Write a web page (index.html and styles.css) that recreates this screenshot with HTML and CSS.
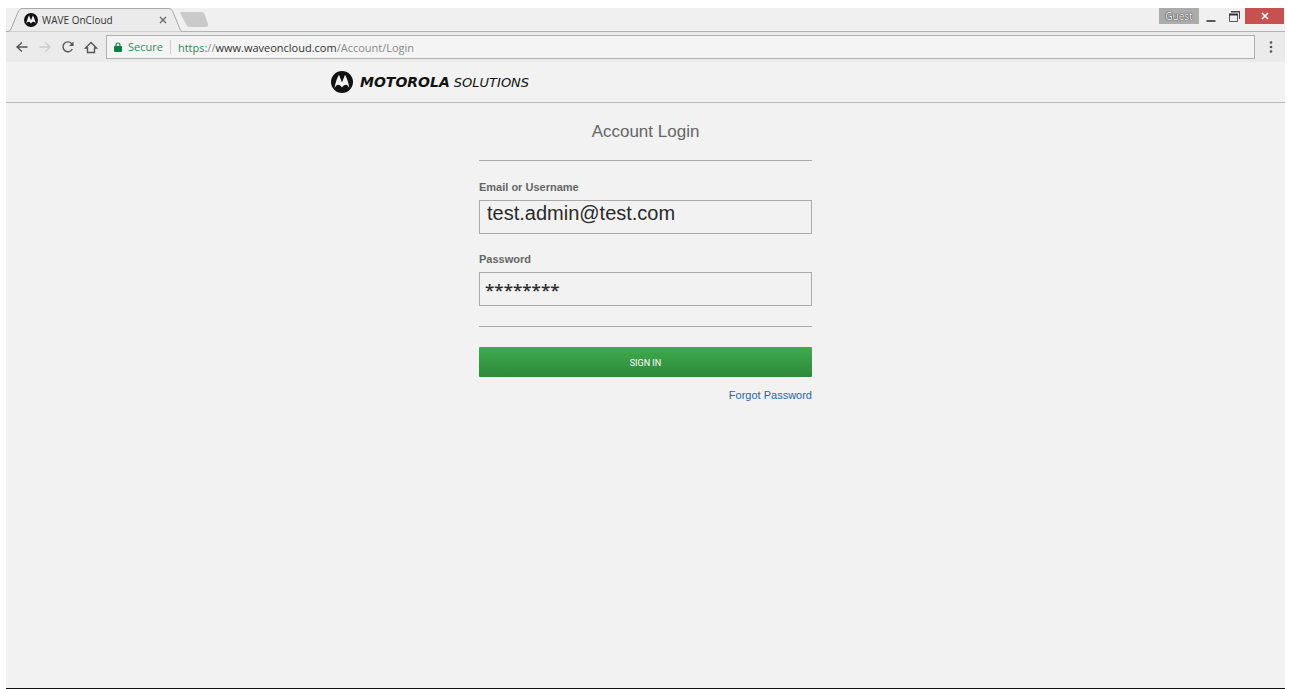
FILE: index.html
```html
<!DOCTYPE html>
<html lang="en">
<head>
  <meta charset="UTF-8">
  <meta name="viewport" content="width=device-width, initial-scale=1.0">
  <title>WAVE OnCloud</title>
  <link rel="stylesheet" href="styles.css">
</head>
<body>
  <svg class="svg-defs">
    <defs>
      <symbol id="moto" viewBox="0 0 24 24">
        <circle cx="12" cy="12" r="12" fill="#111"></circle>
        <path fill="#f2f2f2" d="M8.700 4.200L12 12.600l3.300-8.400c1.700 3 4.200 9 4.700 14.800-1-2.600-2.200-4-3.700-4-1.700 0-2.900.9-4.300 3-1.400-2.100-2.600-3-4.300-3-1.500 0-2.700 1.400-3.700 4 .5-5.800 3-11.800 4.700-14.800z"></path>
      </symbol>
    </defs>
  </svg>

  <div class="window">
    <div class="tabStrip">
      <div class="tab">
        <svg class="tabShape" viewBox="0 0 176 24"><path d="M0 23.500L2 23.500Q4 23 5 21L12 4Q13.500.5 16 .5L163 .5Q165.500.5 167 4L173.500 20Q174.500 23 176 23.500" fill="#ebebeb" stroke="#a9a9a9"></path></svg>
        <svg class="tabIcon"><use href="#moto"></use></svg>
        <span class="tabTitle">WAVE OnCloud</span>
        <button class="tabClose" aria-label="Close tab"><svg viewBox="0 0 8 8"><path d="M1 1L7 7M7 1L1 7" stroke="#666" stroke-width="1.300"></path></svg></button>
      </div>
      <button class="newTab" aria-label="New tab"><svg viewBox="0 0 30 16"><path d="M1 0H21Q23.500 0 24.500 2L28 12Q28.500 15 26 15H10Q7.500 15 6.500 13L.5 2Q0 0 1 0z" fill="#cacaca"></path></svg></button>
      <div class="winButtons">
        <button class="guest">Guest</button>
        <button class="winBtn" aria-label="Minimize"><svg viewBox="0 0 12 12"><path d="M1.500 11H10.500" stroke="#333" stroke-width="1.600"></path></svg></button>
        <button class="winBtn" aria-label="Restore"><svg viewBox="0 0 12 12"><path d="M3 1.500H11.500V9" fill="none" stroke="#444"></path><path d="M3 2H12" stroke="#444"></path><path d="M1.500 4.500H9.500V11.500H1.500z" fill="#f0f0f0" stroke="#555"></path><path d="M1 4.500H10" stroke="#333" stroke-width="2"></path></svg></button>
        <button class="winClose" aria-label="Close"><svg viewBox="0 0 8 8"><path d="M1 1L7 7M7 1L1 7" stroke="#fff" stroke-width="1.600"></path></svg></button>
      </div>
    </div>

    <div class="toolbar">
      <button class="navBtn" aria-label="Back"><svg viewBox="0 0 14 14"><path d="M12.500 7H2.500M7 2.500L2 7l5 4.500"></path></svg></button>
      <button class="navBtn off" aria-label="Forward" disabled><svg viewBox="0 0 14 14"><path d="M1.500 7H11.500M7.500 2.500L12 7l-4.500 4.500"></path></svg></button>
      <button class="navBtn" aria-label="Reload"><svg viewBox="0 0 14 14"><path d="M11.300 9A4.900 4.900 0 1 1 10.600 3.600L12 5"></path><path d="M12.500 1.500V6H8z" class="solid"></path></svg></button>
      <button class="navBtn" aria-label="Home"><svg viewBox="0 0 14 14"><path d="M1.500 8L7 2.500l5.500 5.500H10.500V12.500H3.500V8z"></path></svg></button>
      <div class="address" role="textbox" aria-label="Address" tabindex="0">
        <svg class="lock" viewBox="0 0 8 10"><rect x="0" y="4" width="8" height="6" rx="1" fill="#0b8043"></rect><path d="M2 4.500V3a2 2 0 0 1 4 0v1.500" fill="none" stroke="#0b8043" stroke-width="1.200"></path></svg>
        <span class="secure">Secure</span>
        <span class="url"><span class="scheme">https:</span>//<b>www.waveoncloud.com</b>/Account/Login</span>
      </div>
      <button class="menuBtn" aria-label="Menu"><svg viewBox="0 0 4 14"><circle cx="2" cy="2.500" r="1.300"></circle><circle cx="2" cy="7" r="1.300"></circle><circle cx="2" cy="11.500" r="1.300"></circle></svg></button>
    </div>

    <header class="siteHeader">
      <div class="brand">
        <svg class="brandIcon"><use href="#moto"></use></svg>
        <span class="brandName"><b>MOTOROLA</b> SOLUTIONS</span>
      </div>
    </header>

    <main class="page">
      <form class="loginForm">
        <h1>Account Login</h1>
        <div class="fields">
          <label for="user">Email or Username</label>
          <input type="text" id="user" class="user" value="test.admin@test.com">
          <label for="pass">Password</label>
          <input type="text" id="pass" class="pass" value="********" autocomplete="off">
        </div>
        <button type="submit" class="signIn">SIGN IN</button>
        <a href="#" class="forgot">Forgot Password</a>
      </form>
    </main>
  </div>
</body>
</html>
```
FILE: styles.css
```css
*{box-sizing: border-box;}
body{margin: 0; background: #fff; font-family: "Liberation Sans", Arial, sans-serif;}
button{border: 0; padding: 0; background: none; display: flex; align-items: center; justify-content: center;}
svg{display: block;}
.svg-defs{position: absolute; width: 0; height: 0;}

.window{
	display: flex;
	flex-direction: column;
	min-height: calc(100vh - 8px);
	margin: 8px 7px 0 6px;
	background: #f2f2f2;
	border-bottom: 1px solid #111;
}

/* tabs */
.tabStrip{display: flex; height: 24px; background: #f0f0f0; box-shadow: inset 0 -1px #b4b4b4;}
.tab{position: relative; display: flex; align-items: center; width: 176px; padding: 0 15px 0 18px; font: 10px "Open Sans", sans-serif; color: #333;}
.tabShape{position: absolute; left: 0; top: 0; width: 176px; height: 24px;}
.tabIcon{position: relative; width: 14px; height: 14px;}
.tabTitle{position: relative; flex: 1; padding-left: 4px; white-space: nowrap;}
.tabClose{position: relative; width: 8px; height: 8px;}
.tabClose svg{width: 8px; height: 8px;}
.newTab{width: 30px; height: 24px; margin-left: -2px;}
.newTab svg{width: 30px; height: 16px;}
.winButtons{display: flex; margin-left: auto; padding-right: 1px;}
.guest{width: 40px; height: 16px; background: #ababab; color: #fff; font: 10px "Open Sans", sans-serif; text-shadow: 0 0 1px #222, 0 0 1px #222;}
.winBtn{width: 23px; height: 16px;}
.winBtn svg{width: 12px; height: 12px;}
.winClose{width: 39px; height: 16px; background: #c75050;}
.winClose svg{width: 8px; height: 8px;}

/* toolbar */
.toolbar{display: flex; align-items: center; height: 30px; padding: 0 2px 0 4px; background: #ebebeb;}
.navBtn{width: 23px; height: 24px;}
.navBtn svg{width: 14px; height: 14px; fill: none; stroke: #555; stroke-width: 1.4;}
.navBtn .solid{fill: #555; stroke: none;}
.navBtn.off svg{stroke: #ccc;}
.address{
	flex: 1;
	display: flex;
	align-items: center;
	height: 24px;
	margin-left: 4px;
	padding-left: 7px;
	background: #f4f4f4;
	border: 1px solid #b0b0b0;
	font: 11px "Open Sans", sans-serif;
	white-space: nowrap;
}
.lock{width: 8px; height: 10px;}
.secure{margin-left: 6px; padding-right: 7px; border-right: 1px solid #ccc; line-height: 14px; color: #328a5d;}
.url{margin-left: 7px; color: #888;}
.url b{font-weight: normal; color: #333;}
.scheme{color: #328a5d;}
.menuBtn{width: 24px; height: 24px; margin-left: 4px;}
.menuBtn svg{width: 4px; height: 14px; fill: #555;}

/* site */
.siteHeader{height: 41px; border-bottom: 1px solid #bbb;}
.brand{display: flex; align-items: center; gap: 7px; max-width: 629px; height: 40px; margin: 0 auto;}
.brandIcon{width: 22px; height: 22px;}
.brandName{font: italic 13px "DejaVu Sans", sans-serif; color: #111; white-space: nowrap;}
.brandName b{font-size: 14px;}

.page{flex: 1; padding: 18px 16px;}
.loginForm{display: flex; flex-direction: column; max-width: 333px; margin: 0 auto;}
.loginForm h1{margin: 0 0 17px; font-size: 17px; line-height: 22px; font-weight: normal; text-align: center; color: #666;}
.fields{display: flex; flex-direction: column; padding: 18px 0 20px; border: solid #aaa; border-width: 1px 0;}
.fields label{margin-bottom: 5px; font-size: 11px; line-height: 16px; font-weight: bold; color: #666;}
.fields input{width: 100%; height: 34px; border: 1px solid #aaa; border-radius: 0; background: transparent; outline: 0; color: #2a2a2a;}
.fields .user{margin-bottom: 17px; padding: 0 7px 8px; font: 20px "Liberation Sans", Arial, sans-serif;}
.fields .pass{padding: 0 5px; font: 600 17px "Open Sans", sans-serif;}
.signIn{height: 30px; margin-top: 20px; padding-top: 1px; border-radius: 1px; background: linear-gradient(#3fab4e, #2f883c); color: #fff; font: 9px Roboto, sans-serif;}
.forgot{align-self: flex-end; margin-top: 10px; font-size: 11px; line-height: 16px; color: #2a66a8; text-decoration: none;}
```
